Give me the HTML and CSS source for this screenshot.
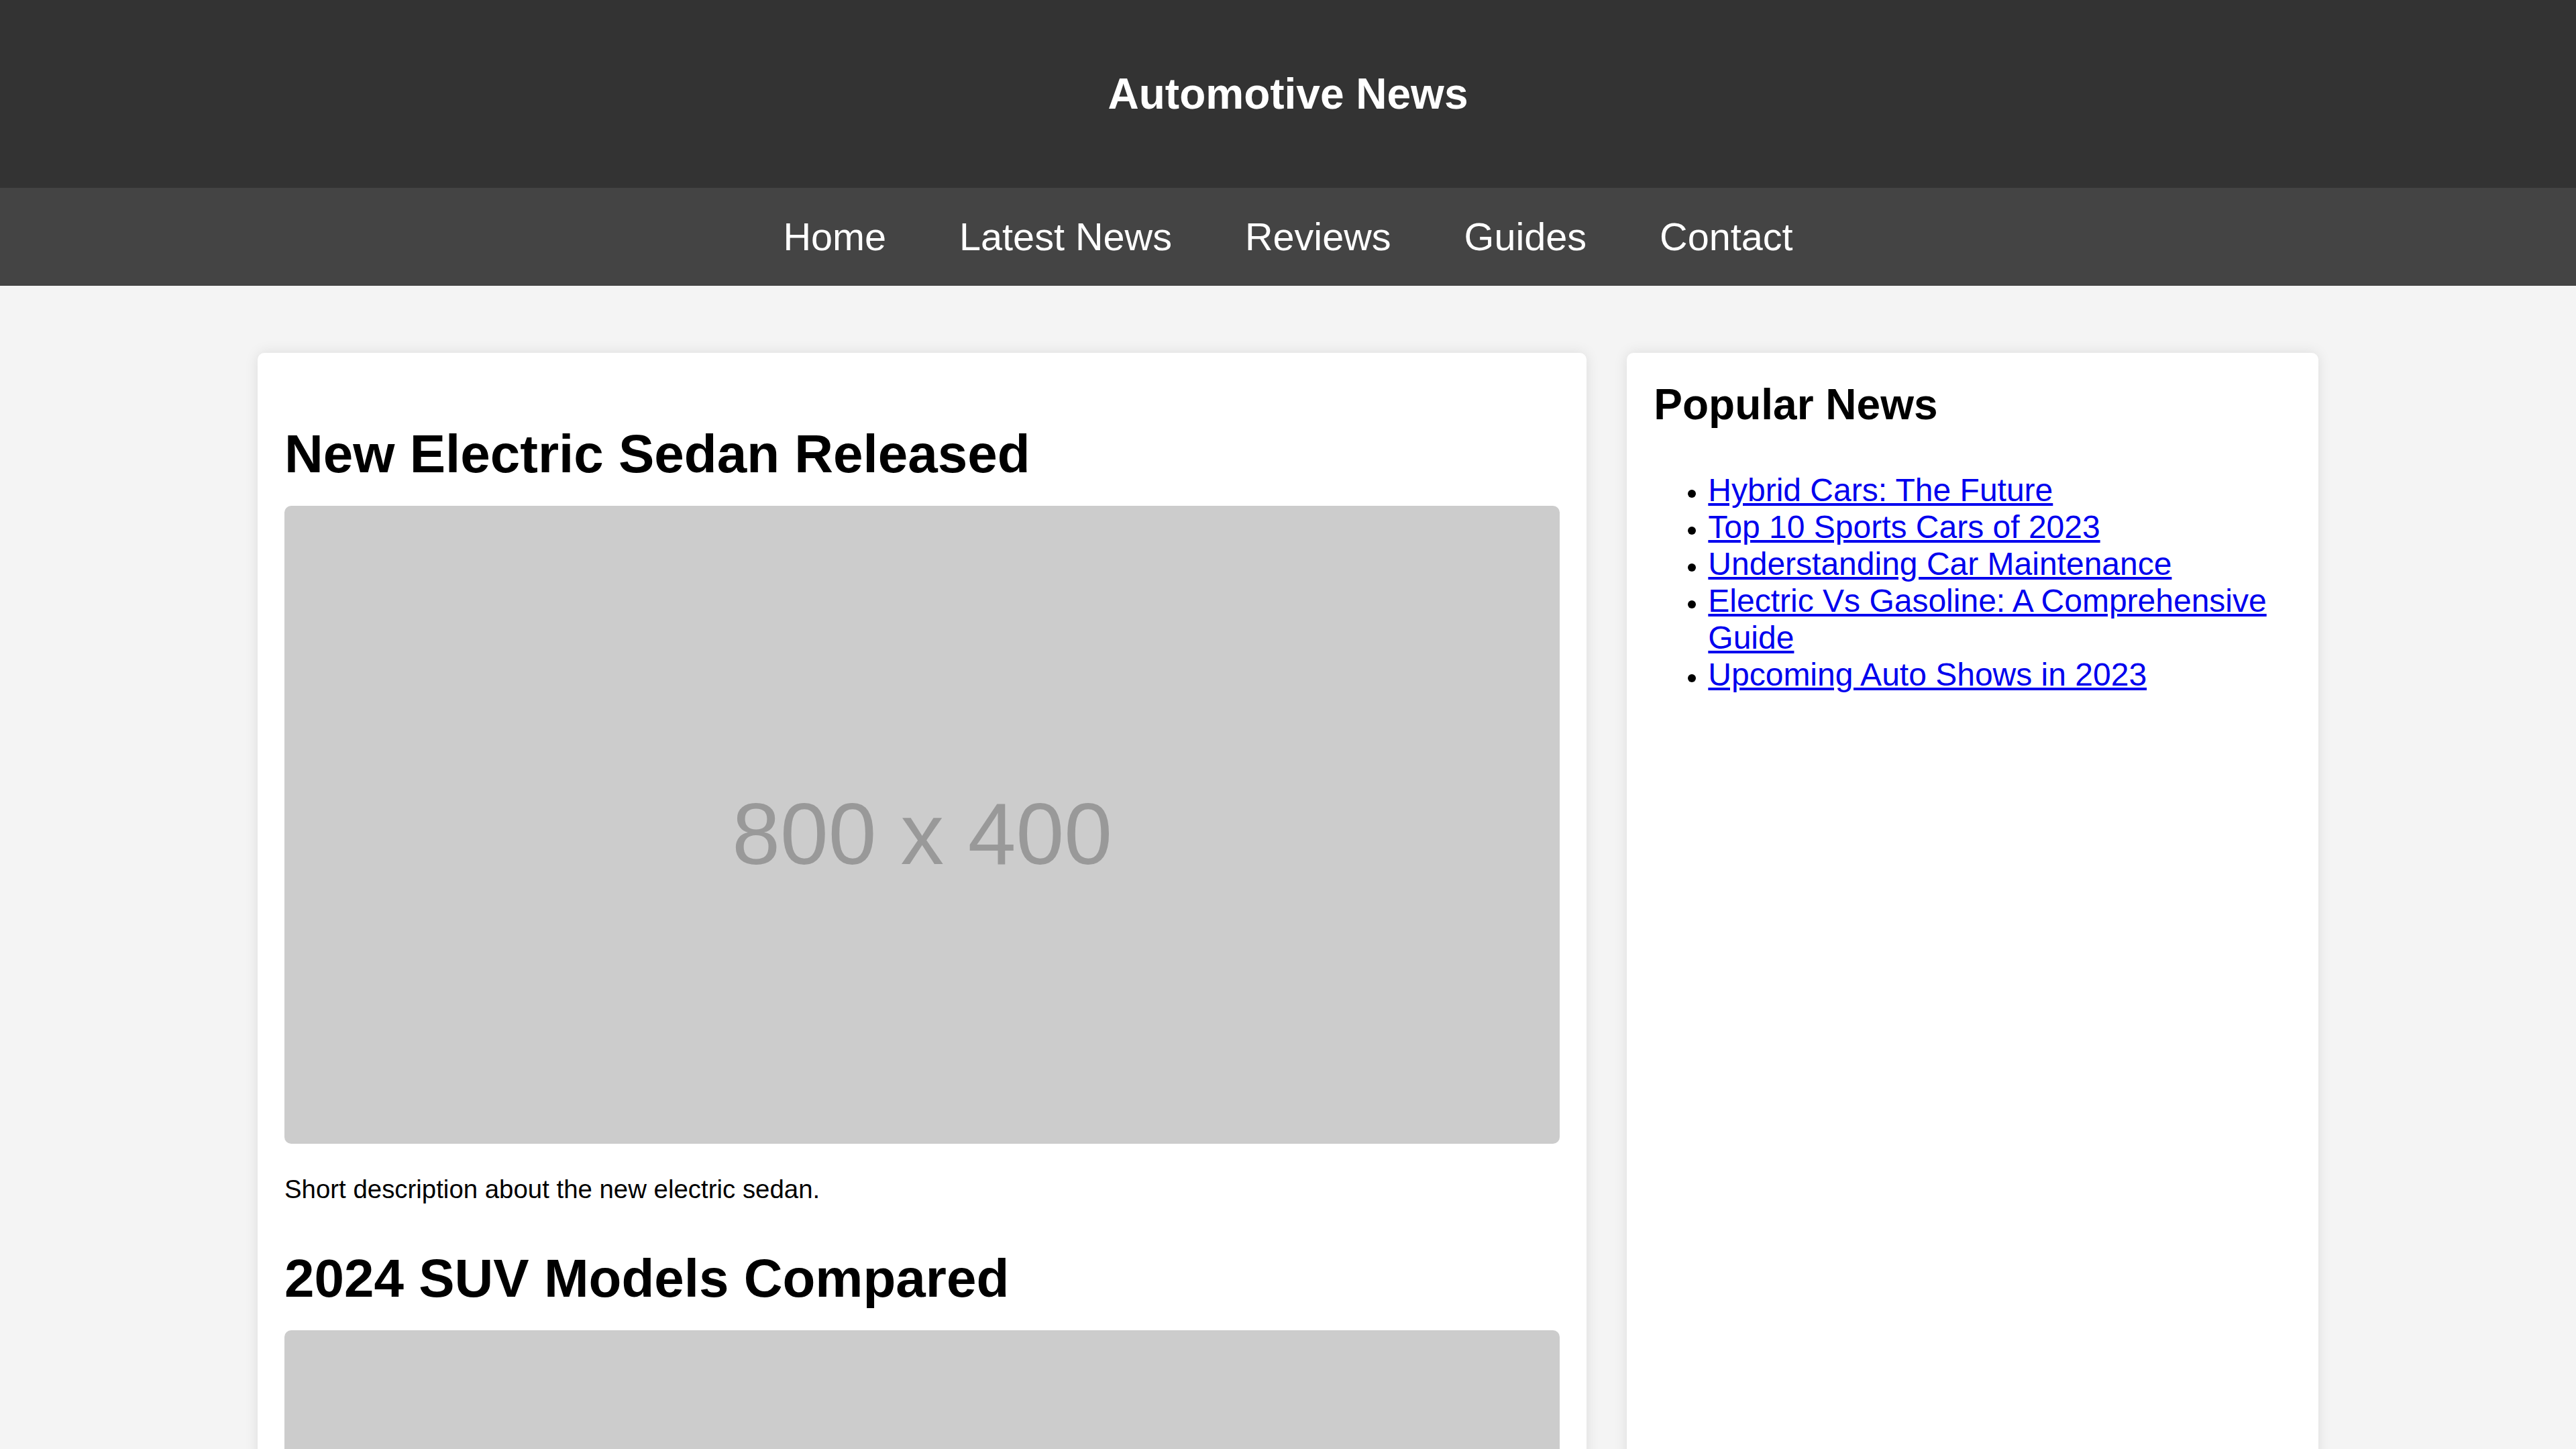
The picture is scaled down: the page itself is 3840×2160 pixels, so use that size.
FILE: index.html
```html
<!DOCTYPE html>
<html lang="en">
<head>
<meta charset="utf-8">
<title>Automotive News</title>
<link rel="stylesheet" href="styles.css">
</head>
<body>
<header class="site-header">
  <h1 class="site-title">Automotive News</h1>
</header>
<nav class="main-nav">
  <a href="#">Home</a>
  <a href="#">Latest News</a>
  <a href="#">Reviews</a>
  <a href="#">Guides</a>
  <a href="#">Contact</a>
</nav>
<div class="container">
  <main class="card content">
    <article class="post">
      <h2 class="post-title">New Electric Sedan Released</h2>
      <div class="placeholder">800 x 400</div>
      <p class="post-text">Short description about the new electric sedan.</p>
    </article>
    <article class="post">
      <h2 class="post-title">2024 SUV Models Compared</h2>
      <div class="placeholder">800 x 400</div>
      <p class="post-text">Short description comparing the 2024 SUV models.</p>
    </article>
  </main>
  <aside class="card sidebar">
    <h3 class="side-title">Popular News</h3>
    <ul class="side-list">
      <li><a href="#">Hybrid Cars: The Future</a></li>
      <li><a href="#">Top 10 Sports Cars of 2023</a></li>
      <li><a href="#">Understanding Car Maintenance</a></li>
      <li><a href="#">Electric Vs Gasoline: A Comprehensive Guide</a></li>
      <li><a href="#">Upcoming Auto Shows in 2023</a></li>
    </ul>
  </aside>
</div>
</body>
</html>
```
FILE: styles.css
```css
* {
  box-sizing: border-box;
}

body {
  margin: 0;
  background: #f4f4f4;
  font-family: "Liberation Sans", Arial, sans-serif;
  font-size: 38.4px;
  color: #000;
}

.site-header {
  background: #333;
  color: #fff;
  height: 280px;
  display: flex;
  align-items: center;
  justify-content: center;
}

.site-title {
  margin: 0;
  font-size: 64px;
  font-weight: bold;
}

.main-nav {
  background: #444;
  height: 146px;
  display: flex;
  align-items: center;
  justify-content: center;
  gap: 109px;
}

.main-nav a {
  color: #fff;
  text-decoration: none;
  font-size: 57.6px;
}

.container {
  width: 3072px;
  margin: 100px auto 100px;
  display: flex;
  gap: 60px;
  align-items: stretch;
}

.card {
  background: #fff;
  border-radius: 10px;
  box-shadow: 0 0 20px rgba(0, 0, 0, 0.1);
  padding: 40px;
}

.content {
  flex: 2 1 0;
}

.sidebar {
  flex: 1 1 0;
}

.post-title {
  font-size: 80px;
  font-weight: bold;
  margin: 65px 0 31px;
}

.placeholder {
  width: 100%;
  aspect-ratio: 2 / 1;
  background: #ccc;
  color: #999;
  border-radius: 10px;
  display: flex;
  align-items: center;
  justify-content: center;
  font-size: 129px;
  padding-top: 27px;
}

.post-text {
  margin: 46px 0 38px;
  font-size: 38.4px;
}

.side-title {
  font-size: 64px;
  font-weight: bold;
  margin: 0 0 63px;
}

.side-list {
  margin: 0;
  padding-left: 81px;
  font-size: 38.4px;
}

.side-list a {
  font-size: 48px;
  color: #0000ee;
  text-decoration: underline;
}
```
